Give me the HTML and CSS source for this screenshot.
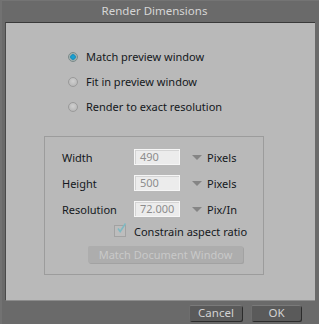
FILE: index.html
```html
<!DOCTYPE html>
<html>
<head>
  <meta charset="UTF-8">
  <title>Render Dimensions</title>
  <link rel="stylesheet" href="styles.css">
</head>
<body>
  <div class="window">
    <div class="titlebar">Render Dimensions</div>

    <div class="panel">
      <!-- mode choice -->
      <div class="modes">
        <label class="mode"><span class="radio checked"></span>Match preview window</label>
        <label class="mode"><span class="radio"></span>Fit in preview window</label>
        <label class="mode"><span class="radio"></span>Render to exact resolution</label>
      </div>

      <!-- exact resolution group (disabled) -->
      <div class="group">
        <div class="row">
          <span class="label">Width</span>
          <span class="field">490</span>
          <span class="drop"></span>
          <span class="unit">Pixels</span>
        </div>
        <div class="row">
          <span class="label">Height</span>
          <span class="field">500</span>
          <span class="drop"></span>
          <span class="unit">Pixels</span>
        </div>
        <div class="row">
          <span class="label">Resolution</span>
          <span class="field">72.000</span>
          <span class="drop"></span>
          <span class="unit">Pix/In</span>
        </div>
        <div class="check-row">
          <span class="check">
            <svg width="12" height="12" viewBox="0 0 12 12">
              <path d="M3 5.5 L5.2 8.5 L10.5 0.5" fill="none" stroke="#7fb9c2" stroke-width="1.6"/>
            </svg>
          </span>
          <span>Constrain aspect ratio</span>
        </div>
        <div class="doc-btn">Match Document Window</div>
      </div>
    </div>

    <div class="footer">
      <span class="btn cancel">Cancel</span>
      <span class="btn ok">OK</span>
    </div>
  </div>
</body>
</html>
```

FILE: styles.css
```css
html, body {
  margin: 0;
  padding: 0;
}
body {
  background-color: #6a6a6a;
  font-family: "Noto Sans", "Open Sans", sans-serif;
  font-size: 11px;
}
.window {
  width: 319px;
  height: 324px;
  box-sizing: border-box;
  border-left: 2px solid #727272;
  border-top: 1px solid #747474;
  display: flex;
  flex-direction: column;
}
.titlebar {
  height: 21px;
  line-height: 19px;
  text-align: center;
  color: #d6d6d6;
  font-size: 11.5px;
  padding-right: 12px;
}

/* main light panel */
.panel {
  margin-left: 3px;
  margin-right: 4px;
  height: 279px;
  box-sizing: border-box;
  background-color: #b9b9b9;
  border-top: 1px solid #3a3a3a;
  border-left: 1px solid #4a4a4a;
  border-bottom: 1px solid #8c8c8c;
  color: #141820;
}
.modes {
  padding-top: 21px;
  padding-left: 62px;
  display: flex;
  flex-direction: column;
}
.mode {
  height: 25px;
  display: flex;
  align-items: center;
}
.radio {
  width: 10px;
  height: 10px;
  border-radius: 50%;
  box-sizing: border-box;
  border: 1px solid #9a9a9a;
  background: radial-gradient(circle at 50% 40%, #d0d0d0, #b0b0b0);
  margin-right: 8px;
}
.radio.checked {
  border: 1px solid #7a8a8a;
  background: radial-gradient(circle, #1aa8d8 0, #1a90c0 2.5px, #9aaaa8 3px, #b8c0c0 5px);
}

/* disabled group box */
.group {
  margin-left: 38px;
  margin-top: 17px;
  width: 220px;
  height: 139px;
  box-sizing: border-box;
  border: 1px solid #9c9c9c;
  padding: 7px 0 0 17px;
}
.row {
  height: 26px;
  display: flex;
  align-items: center;
}
.label {
  width: 72px;
}
.field {
  width: 46px;
  height: 16px;
  box-sizing: border-box;
  background-color: #ececec;
  border: 1px solid #f6f6f6;
  box-shadow: inset 1px 1px 0 #d4d4d4;
  color: #8c8c8c;
  line-height: 14px;
  padding-left: 5px;
}
.drop {
  margin-left: 12px;
  margin-right: 5px;
  width: 0;
  height: 0;
  border-left: 5.5px solid transparent;
  border-right: 5.5px solid transparent;
  border-top: 5px solid #858585;
}
.unit {
  color: #141820;
}
.check-row {
  height: 18px;
  display: flex;
  align-items: center;
  padding-left: 52px;
}
.check {
  width: 12px;
  height: 12px;
  box-sizing: border-box;
  border: 1px solid #a2a2a2;
  background-color: #bdbdbd;
  margin-right: 8px;
  position: relative;
}
.check svg {
  position: absolute;
  left: 0;
  top: -3px;
}
.doc-btn {
  margin-top: 6px;
  margin-left: 26px;
  width: 155px;
  height: 17px;
  box-sizing: border-box;
  background-color: #adadad;
  border-radius: 2px;
  box-shadow: 1px 1px 0 #a2a2a2;
  color: #c9c9c9;
  text-align: center;
  line-height: 17px;
}

/* bottom buttons */
.footer {
  flex: 1;
  display: flex;
  align-items: center;
  padding-left: 187px;
  gap: 9px;
}
.btn {
  height: 16px;
  box-sizing: border-box;
  background-color: #5a5a5a;
  border-top: 1px solid #7a7a7a;
  border-left: 1px solid #6e6e6e;
  border-radius: 2px;
  box-shadow: 1px 1px 0 #2c2c2c;
  color: #d2d2d2;
  text-align: center;
  line-height: 14px;
  font-size: 11.5px;
}
.cancel {
  width: 53px;
}
.ok {
  width: 50px;
}
```
